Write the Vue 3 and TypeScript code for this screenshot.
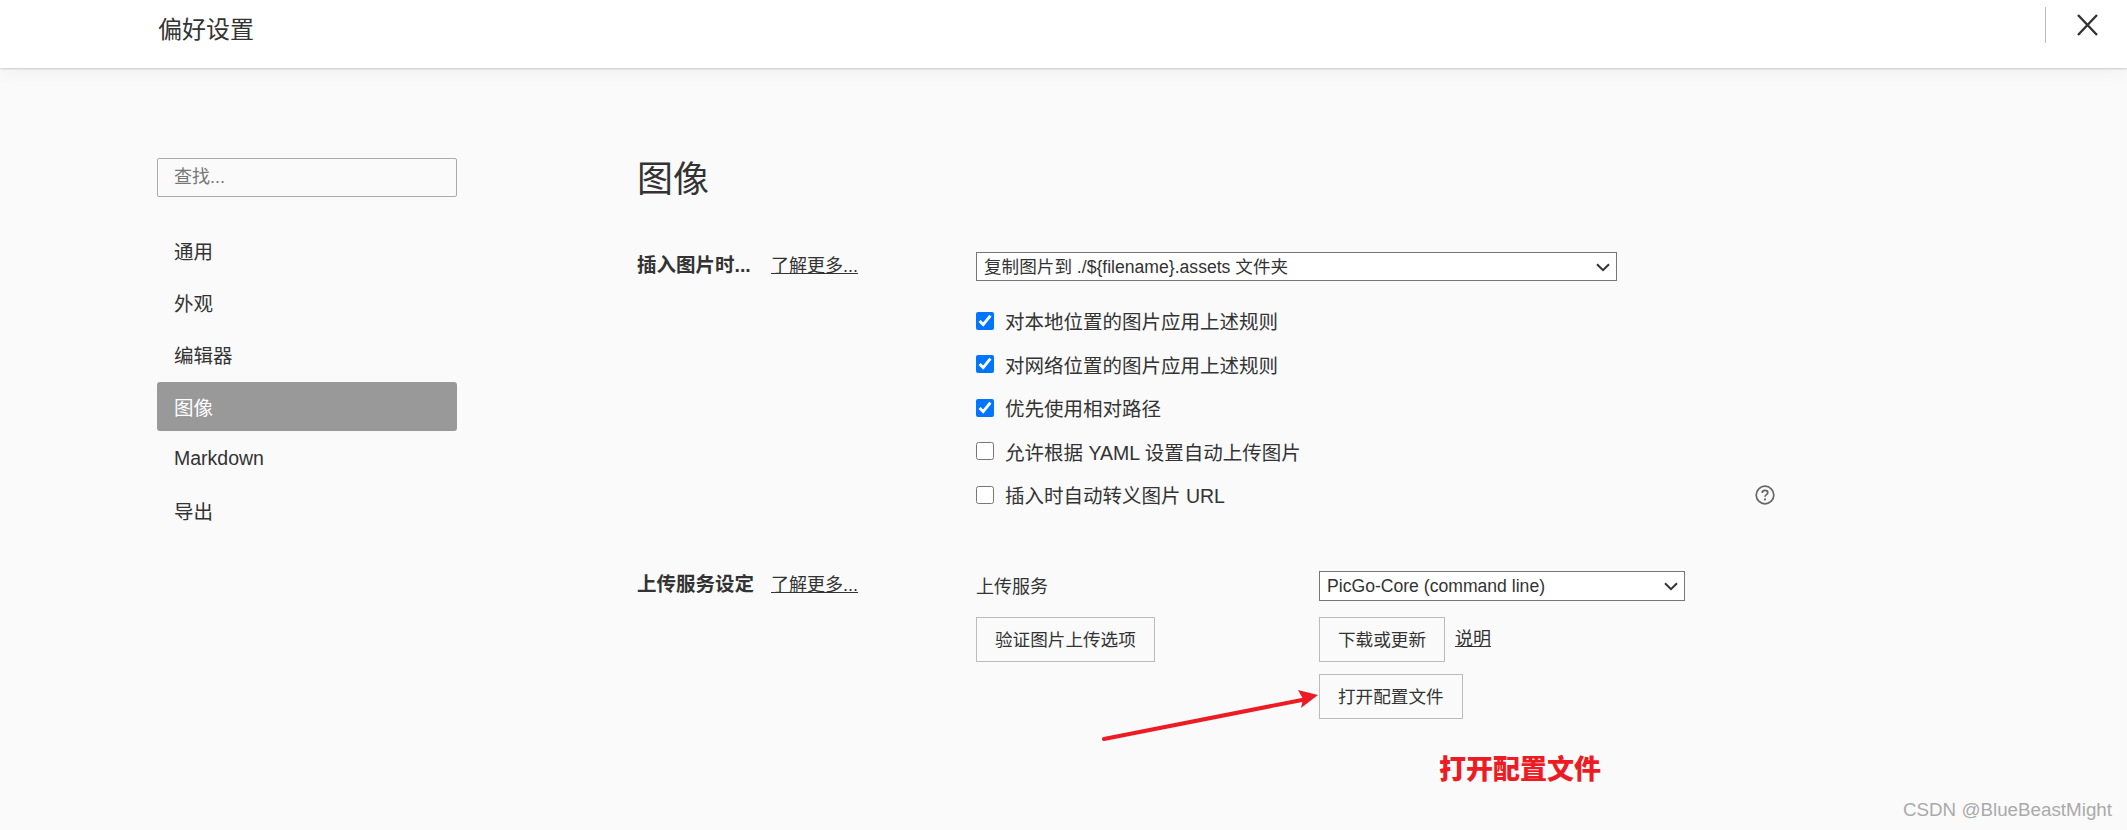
<template>
  <div class="page">
    <header class="topbar">
      <h2 class="topbar__title">偏好设置</h2>
      <span class="topbar__divider"></span>
      <button type="button" class="topbar__close" aria-label="关闭">
        <svg width="21" height="22" viewBox="0 0 21 22">
          <path d="M1 1 L20 21 M20 1 L1 21" fill="none" stroke="#333" stroke-width="2.4" />
        </svg>
      </button>
    </header>

    <div class="layout">
      <aside class="sidebar">
        <input class="search" type="text" placeholder="查找..." />
        <nav class="nav">
          <a v-for="item in navItems" :key="item" class="nav__item" :class="{ 'nav__item--active': item === activeNav }">
            {{ item }}
          </a>
        </nav>
      </aside>

      <main class="content">
        <h1>图像</h1>

        <section class="setting">
          <div class="setting__label">
            <strong>插入图片时...</strong>
            <a class="link">了解更多...</a>
          </div>
          <div class="setting__body">
            <div class="select select--wide">
              <select>
                <option>复制图片到 ./${filename}.assets 文件夹</option>
              </select>
              <svg width="14" height="9" viewBox="0 0 14 9">
                <path d="M1 1.2 L7 7.2 L13 1.2" fill="none" stroke="#333" stroke-width="2" />
              </svg>
            </div>
            <ul class="checks">
              <li v-for="opt in options" :key="opt.label" class="checks__row">
                <input type="checkbox" :checked="opt.checked" />
                <span>{{ opt.label }}</span>
                <svg v-if="opt.help" class="help" width="20" height="20" viewBox="0 0 20 20">
                  <circle cx="10" cy="10" r="8.8" fill="none" stroke="#666" stroke-width="1.7" />
                  <path d="M7.2 7.9 C7.2 6.2 8.5 5.3 10 5.3 C11.6 5.3 12.8 6.3 12.8 7.7 C12.8 9.6 10 9.6 10 11.8" fill="none" stroke="#666" stroke-width="1.7" />
                  <circle cx="10" cy="14.4" r="1.1" fill="#666" />
                </svg>
              </li>
            </ul>
          </div>
        </section>

        <section class="setting setting--upload">
          <div class="setting__label">
            <strong>上传服务设定</strong>
            <a class="link">了解更多...</a>
          </div>
          <div class="upload">
            <div class="upload__col upload__col--left">
              <span class="upload__name">上传服务</span>
              <button type="button" class="btn">验证图片上传选项</button>
            </div>
            <div class="upload__col">
              <div class="select select--service">
                <select>
                  <option>PicGo-Core (command line)</option>
                </select>
                <svg width="14" height="9" viewBox="0 0 14 9">
                  <path d="M1 1.2 L7 7.2 L13 1.2" fill="none" stroke="#333" stroke-width="2" />
                </svg>
              </div>
              <div class="upload__actions">
                <button type="button" class="btn btn--download">下载或更新</button>
                <a class="link link--plain">说明</a>
              </div>
              <button type="button" class="btn">打开配置文件</button>
            </div>
          </div>
        </section>
      </main>
    </div>

    <svg class="arrow" width="230" height="60" viewBox="0 0 230 60">
      <path d="M2 51 L205 11" fill="none" stroke="#ed1c24" stroke-width="4" stroke-linecap="round" />
      <path d="M216 7 L196 2 L201 11 L199 20 Z" fill="#ed1c24" />
    </svg>
    <div class="callout">打开配置文件</div>
    <div class="watermark">CSDN @BlueBeastMight</div>
  </div>
</template>

<script setup lang="ts">
type CheckOption = {
  label: string;
  checked: boolean;
  help?: boolean;
};

const navItems: string[] = ['通用', '外观', '编辑器', '图像', 'Markdown', '导出'];
const activeNav = '图像';

const options: CheckOption[] = [
  { label: '对本地位置的图片应用上述规则', checked: true },
  { label: '对网络位置的图片应用上述规则', checked: true },
  { label: '优先使用相对路径', checked: true },
  { label: '允许根据 YAML 设置自动上传图片', checked: false },
  { label: '插入时自动转义图片 URL', checked: false, help: true }
];
</script>

<style>
body {
  margin: 0;
  background: #fafafa;
}
</style>

<style scoped>
.page {
  position: relative;
  height: 830px;
  overflow: hidden;
  background: #fafafa;
  color: #333;
  font-family: "Liberation Sans", "Noto Sans CJK SC", sans-serif;
  font-size: 19.5px;
}

.topbar {
  position: relative;
  display: flex;
  align-items: center;
  height: 68px;
  padding-left: 158px;
  background: #fff;
  box-shadow: 0 1px 2px rgba(0, 0, 0, 0.18), 0 6px 18px rgba(0, 0, 0, 0.035);
}

.topbar__title {
  margin: -8px 0 0;
  font-size: 24px;
  font-weight: 400;
  line-height: 34px;
}

.topbar__divider {
  width: 1px;
  height: 36px;
  margin: -18px 0 0 auto;
  background: #bbb;
}

.topbar__close {
  display: flex;
  margin: -18px 29px 0 31px;
  padding: 0;
  border: none;
  background: none;
}

.layout {
  display: flex;
}

.sidebar {
  width: 300px;
  margin: 90px 0 0 157px;
}

.search {
  box-sizing: border-box;
  display: block;
  width: 100%;
  height: 39px;
  padding: 0 16px;
  border: 1px solid #aaa;
  border-radius: 2px;
  background: #fafafa;
  color: #333;
  font: inherit;
  font-size: 18px;
}

.search::placeholder {
  color: #777;
}

.nav {
  display: flex;
  flex-direction: column;
  gap: 3px;
  margin-top: 29px;
}

.nav__item {
  display: flex;
  align-items: center;
  height: 49px;
  padding-left: 17px;
  border-radius: 3px;
}

.nav__item--active {
  background: #999;
  color: #fff;
}

.content {
  margin-left: 180px;
  padding-top: 90px;
}

h1 {
  margin: 0;
  font-size: 36px;
  font-weight: 400;
  line-height: 44px;
}

.setting {
  display: flex;
  margin-top: 50px;
}

.setting__label {
  display: flex;
  gap: 20px;
  width: 339px;
  line-height: 26px;
}

.setting__label strong {
  flex: none;
  width: 114px;
  font-size: 19.5px;
  white-space: nowrap;
}

.link {
  font-size: 18px;
  line-height: 28px;
  text-decoration: underline;
}

.select {
  position: relative;
  box-sizing: border-box;
}

.select select {
  display: block;
  box-sizing: border-box;
  width: 100%;
  height: 100%;
  padding: 0 7px;
  border: 1px solid #767676;
  border-radius: 0;
  background: #fff;
  color: #333;
  font: inherit;
  font-size: 17.6px;
  appearance: none;
}

.select svg {
  position: absolute;
  top: 11px;
  right: 7px;
  pointer-events: none;
}

.select--wide {
  width: 641px;
  height: 29px;
}

.select--service {
  width: 366px;
  height: 30px;
}

.checks {
  width: 799px;
  margin: 18px 0 0;
  padding: 0;
  list-style: none;
}

.checks__row {
  display: flex;
  align-items: center;
  height: 43.5px;
}

.checks__row input {
  width: 18px;
  height: 18px;
  margin: 0 11px 0 0;
}

.help {
  margin-left: auto;
}

.setting--upload {
  margin-top: 54px;
}

.upload {
  display: flex;
}

.upload__col {
  display: flex;
  flex-direction: column;
  align-items: flex-start;
}

.upload__col--left {
  width: 343px;
}

.upload__name {
  height: 30px;
  margin-bottom: 16px;
  font-size: 18px;
  line-height: 32px;
}

.upload__actions {
  display: flex;
  align-items: center;
  gap: 10px;
  margin: 16px 0 12px;
}

.btn {
  box-sizing: border-box;
  height: 45px;
  padding: 0 18px 2px;
  border: 1px solid #bbb;
  background: #fafafa;
  color: #333;
  font: inherit;
  font-size: 17.6px;
}

.btn--download {
  width: 126px;
}

.arrow {
  position: absolute;
  left: 1102px;
  top: 688px;
}

.callout {
  position: absolute;
  left: 1439px;
  top: 751px;
  color: #ed1c24;
  font-size: 27px;
  font-weight: 900;
  line-height: 38px;
}

.watermark {
  position: absolute;
  right: 15px;
  top: 798px;
  color: #aaa;
  font-size: 18.8px;
  line-height: 24px;
}
</style>
